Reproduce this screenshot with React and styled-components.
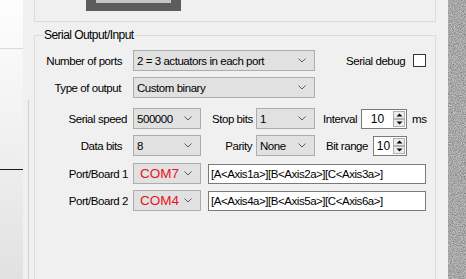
import React from 'react'
import styled, { createGlobalStyle } from 'styled-components'

const GlobalStyle = createGlobalStyle`
  html, body {
    margin: 0;
    padding: 0;
  }
  body {
    width: 466px;
    height: 279px;
    overflow: hidden;
    background: #f0f0f0;
    font-family: 'Liberation Sans', Arial, sans-serif;
    font-size: 11.5px;
    color: #000;
  }
`

export default function App() {
  return (
    <>
      <GlobalStyle />
      <Screen>
        <LeftStrip>
          <StripGap $h={48} />
          <StripLine $color="#d9d9d9" />
          <StripGap $h={120} />
          <StripLine $color="#1a1a1a" />
        </LeftStrip>

        <Panel>
          <Rail />
          <Content>
            <TopGroup>
              <Picture>
                <PictureInner />
              </Picture>
            </TopGroup>

            <GroupHeader>
              <HeaderCorner />
              <GroupTitle>Serial Output/Input</GroupTitle>
              <HeaderLine />
            </GroupHeader>

            <GroupBody>
              <Row $top={8}>
                <Label $w={87} $mr={11}>Number of ports</Label>
                <Combo $w={182} value="2 = 3 actuators in each port" />
                <Label $w={60} $ml={31} $mr={7} $left>Serial debug</Label>
                <CheckBox />
              </Row>

              <Row $top={6}>
                <Label $w={86} $mr={12}>Type of output</Label>
                <Combo $w={182} value="Custom binary" />
              </Row>

              <Row $top={10}>
                <Label $w={92} $mr={6}>Serial speed</Label>
                <Combo $w={68} value="500000" />
                <Label $w={40} $ml={11} $mr={4}>Stop bits</Label>
                <Combo $w={59} value="1" />
                <Label $w={34} $ml={8} $mr={4}>Interval</Label>
                <Spin $w={46} value="10" />
                <Label $w={16} $ml={5} $left>ms</Label>
              </Row>

              <Row $top={6}>
                <Label $w={87} $mr={11}>Data bits</Label>
                <Combo $w={68} value="8" />
                <Label $w={51} $mr={4}>Parity</Label>
                <Combo $w={59} value="None" />
                <Label $w={53} $mr={5}>Bit range</Label>
                <Spin $w={34} value="10" />
              </Row>

              <Row $top={7}>
                <Label $w={93} $mr={5}>Port/Board 1</Label>
                <Combo $w={68} value="COM7" port />
                <TextBox $w={218} $ml={7}>[A&lt;Axis1a&gt;][B&lt;Axis2a&gt;][C&lt;Axis3a&gt;]</TextBox>
              </Row>

              <Row $top={6}>
                <Label $w={93} $mr={5}>Port/Board 2</Label>
                <Combo $w={68} value="COM4" port />
                <TextBox $w={218} $ml={7}>[A&lt;Axis4a&gt;][B&lt;Axis5a&gt;][C&lt;Axis6a&gt;]</TextBox>
              </Row>
            </GroupBody>
          </Content>
        </Panel>

        <Texture>
          <svg width="18" height="279">
            <filter id="granite">
              <feTurbulence type="fractalNoise" baseFrequency="0.9" numOctaves="3" seed="7" />
              <feColorMatrix
                type="matrix"
                values="0.6 0 0 0 0.09  0.6 0 0 0 0.09  0.6 0 0 0 0.09  0 0 0 0 1"
              />
            </filter>
            <rect width="18" height="279" filter="url(#granite)" />
          </svg>
        </Texture>
      </Screen>
    </>
  )
}

function Combo({ value, port, ...rest }) {
  return (
    <ComboBox {...rest}>
      <ComboText $port={port}>{value}</ComboText>
      <svg width="8" height="5" viewBox="0 0 8 5">
        <path d="M0.5 0.5 L4 4 L7.5 0.5" stroke="#5a5a5a" strokeWidth="1" fill="none" />
      </svg>
    </ComboBox>
  )
}

function Spin({ value, ...rest }) {
  return (
    <SpinBox {...rest}>
      <SpinText>{value}</SpinText>
      <SpinButtons>
        <SpinButton>
          <svg width="7" height="4" viewBox="0 0 7 4">
            <polygon points="0.5,3.5 3.5,0.5 6.5,3.5" fill="#000" />
          </svg>
        </SpinButton>
        <SpinButton>
          <svg width="7" height="4" viewBox="0 0 7 4">
            <polygon points="0.5,0.5 3.5,3.5 6.5,0.5" fill="#000" />
          </svg>
        </SpinButton>
      </SpinButtons>
    </SpinBox>
  )
}

const Screen = styled.div`
  display: flex;
  width: 466px;
  height: 279px;
`

const LeftStrip = styled.div`
  display: flex;
  flex-direction: column;
  width: 23px;
  background: linear-gradient(#fdfdfd, #f3f3f3 40%, #e1e1e1);
`

const StripGap = styled.div`
  height: ${(p) => p.$h}px;
`

const StripLine = styled.div`
  height: 1px;
  background: ${(p) => p.$color};
`

const Panel = styled.div`
  display: flex;
  width: 425px;
  background: #f0f0f0;
`

const Rail = styled.div`
  width: 1px;
  margin: 100px 5px 0 5px;
  background: #d0d0d0;
`

const Content = styled.div`
  display: flex;
  flex-direction: column;
  width: 402px;
`

const TopGroup = styled.div`
  display: flex;
  height: 21px;
  border: 1px solid #dcdcdc;
  border-top: none;
  margin-bottom: 7px;
`

const Picture = styled.div`
  display: flex;
  justify-content: center;
  width: 95px;
  height: 11px;
  margin-left: 51px;
  background: #5c5c5c;
`

const PictureInner = styled.div`
  width: 75px;
  height: 3px;
  background: #c4c4c4;
`

const GroupHeader = styled.div`
  display: flex;
  height: 13px;
`

const HeaderCorner = styled.div`
  align-self: flex-end;
  width: 8px;
  height: 6px;
  border-top: 1px solid #dcdcdc;
  border-left: 1px solid #dcdcdc;
`

const GroupTitle = styled.div`
  padding: 0 1px;
  line-height: 13px;
  font-size: 12px;
  letter-spacing: -0.55px;
  white-space: nowrap;
`

const HeaderLine = styled.div`
  flex: 1;
  align-self: flex-end;
  height: 6px;
  border-top: 1px solid #dcdcdc;
  border-right: 1px solid #dcdcdc;
`

const GroupBody = styled.div`
  flex: 1;
  display: flex;
  flex-direction: column;
  border-left: 1px solid #dcdcdc;
  border-right: 1px solid #dcdcdc;
`

const Row = styled.div`
  display: flex;
  align-items: center;
  height: 21px;
  margin-top: ${(p) => p.$top}px;
`

const Label = styled.div`
  flex: none;
  width: ${(p) => p.$w}px;
  margin-left: ${(p) => p.$ml || 0}px;
  margin-right: ${(p) => p.$mr || 0}px;
  text-align: ${(p) => (p.$left ? 'left' : 'right')};
  letter-spacing: -0.45px;
  white-space: nowrap;
`

const ComboBox = styled.div`
  flex: none;
  box-sizing: border-box;
  display: flex;
  align-items: center;
  width: ${(p) => p.$w}px;
  height: 21px;
  padding: 0 8px 0 0;
  background: #e1e1e1;
  border: 1px solid #adadad;
`

const ComboText = styled.div`
  flex: 1;
  padding-left: ${(p) => (p.$port ? 6 : 3)}px;
  color: ${(p) => (p.$port ? '#e8141b' : '#000')};
  font-size: ${(p) => (p.$port ? 13.5 : 11.5)}px;
  letter-spacing: ${(p) => (p.$port ? '0' : '-0.45px')};
  white-space: nowrap;
  overflow: hidden;
`

const CheckBox = styled.div`
  flex: none;
  box-sizing: border-box;
  width: 13px;
  height: 13px;
  background: #fff;
  border: 1px solid #333;
`

const SpinBox = styled.div`
  flex: none;
  box-sizing: border-box;
  display: flex;
  align-items: center;
  width: ${(p) => p.$w}px;
  height: 20px;
  padding: 0 1px 0 0;
  background: #fff;
  border: 1px solid #7a7a7a;
`

const SpinText = styled.div`
  flex: 1;
  text-align: center;
  font-size: 12px;
`

const SpinButtons = styled.div`
  display: flex;
  flex-direction: column;
`

const SpinButton = styled.div`
  box-sizing: border-box;
  display: flex;
  align-items: center;
  justify-content: center;
  width: 12px;
  height: 8px;
  background: #ececec;
  border: 1px solid #b0b0b0;
`

const TextBox = styled.div`
  flex: none;
  box-sizing: border-box;
  display: flex;
  align-items: center;
  width: ${(p) => p.$w}px;
  height: 20px;
  margin-left: ${(p) => p.$ml}px;
  padding-left: 2px;
  background: #fff;
  border: 1px solid #7a7a7a;
  letter-spacing: -0.45px;
  white-space: nowrap;
`

const Texture = styled.div`
  flex: 1;
  display: flex;
  background: #5c5c5c;
`
